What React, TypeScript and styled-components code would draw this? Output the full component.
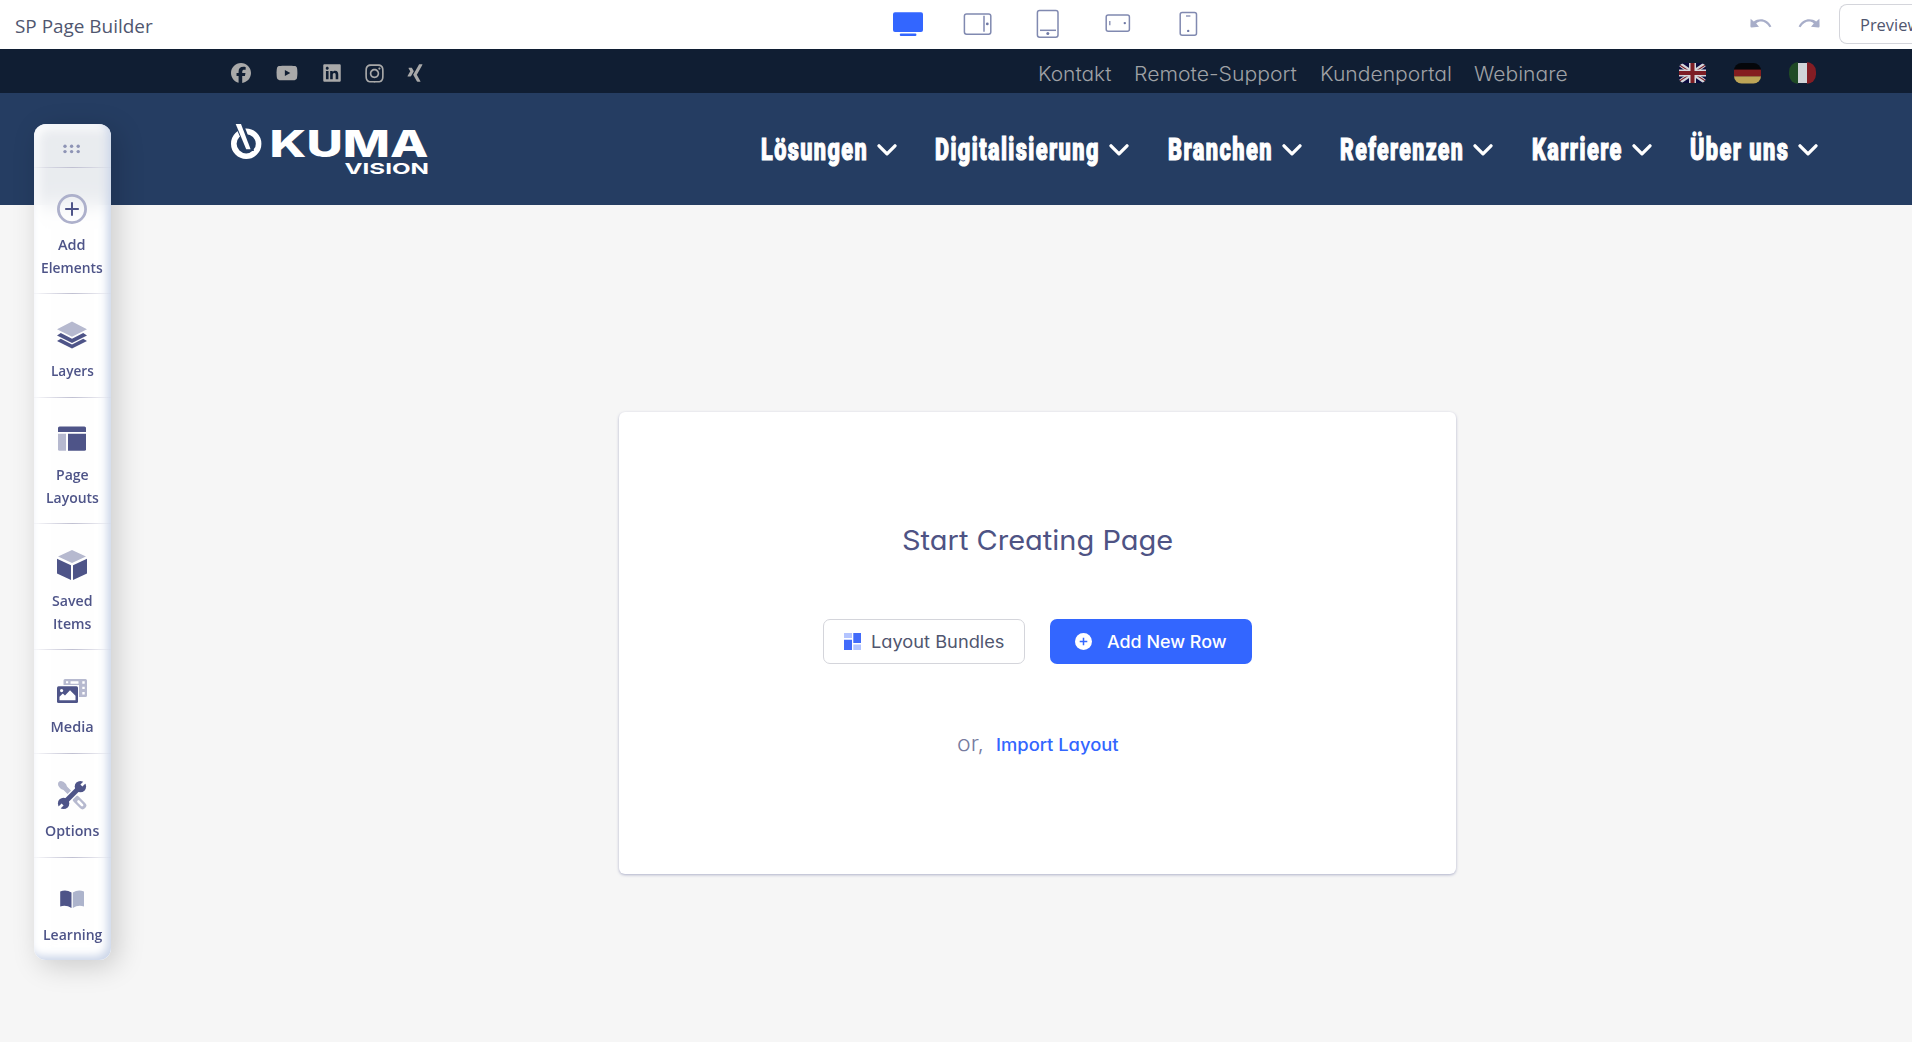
import React, { useLayoutEffect, useRef, useState } from "react";
import styled, { createGlobalStyle, css } from "styled-components";
import { FaFacebook, FaInstagram, FaLinkedin, FaXing, FaYoutube } from "react-icons/fa6";

const ui = `"Open Sans", "Noto Sans", sans-serif`;
const geometric = `Inter, "Liberation Sans", sans-serif`;

const GlobalStyle = createGlobalStyle`
  * { box-sizing: border-box; }
  body { margin: 0; background: #f6f6f6; overflow: hidden; }
`;

const FitBox = styled.span<{ $width: number }>`
  display: flex;
  flex: none;
  width: ${(p) => p.$width}px;
`;

/* cv11 selects the single-storey "a" in Inter. */
const FitInner = styled.span`
  flex: none;
  white-space: nowrap;
  transform-origin: left center;
  font-feature-settings: "cv11" 1;
`;

/* Stretches or condenses a label so it fills the given width exactly. */
function FitText({ width, children }: { width: number; children: string }) {
  const ref = useRef<HTMLSpanElement>(null);
  const [scale, setScale] = useState(1);
  useLayoutEffect(() => {
    if (ref.current) setScale(width / ref.current.offsetWidth);
  }, [width, children]);
  return (
    <FitBox $width={width}>
      <FitInner ref={ref} style={{ transform: `scaleX(${scale})` }}>
        {children}
      </FitInner>
    </FitBox>
  );
}

const Page = styled.div`
  display: flex;
  flex-direction: column;
  width: 100%;
  height: 1042px;
  overflow: hidden;
`;

const Toolbar = styled.header`
  display: grid;
  grid-template-columns: 893px 1fr auto;
  height: 49px;
  background: #fff;
  flex: none;
`;

const AppTitle = styled.div`
  padding: 0 0 0 15px;
  font: 400 18.5px/52px ${ui};
  color: #50566f;
`;

const Devices = styled.div`
  display: flex;
  align-items: flex-start;
  svg { display: block; flex: none; }
`;

const Actions = styled.div`
  display: flex;
  align-items: flex-start;
  color: #a8aec9;
  svg { margin: 17px 24px 0 0; flex: none; }
`;

const PreviewButton = styled.button`
  width: 73px;
  height: 40px;
  margin: 4px 0 0 -6px;
  padding: 0 0 0 20px;
  overflow: hidden;
  border: 1px solid #d4d5db;
  border-right: 0;
  border-radius: 8px 0 0 8px;
  background: #fff;
  font: 400 17px/40px ${ui};
  color: #50566f;
  text-align: left;
`;

const TopStrip = styled.div`
  display: flex;
  align-items: center;
  height: 44px;
  padding: 0 96px 0 231px;
  background: #101e33;
  flex: none;
`;

const Socials = styled.div`
  display: flex;
  align-items: center;
  color: #a9a9a9;
  width: 807px;
  padding-top: 4px;
  svg { display: block; flex: none; }
`;

const StripLinks = styled.nav`
  display: flex;
  gap: 22.8px;
  padding-top: 6px;
  font: 300 19.5px/32px ${geometric};
  color: #9fa1a5;
`;

const Flags = styled.div`
  display: flex;
  gap: 28px;
  margin-left: auto;
  padding-top: 3px;
  svg { display: block; }
`;

const SiteHeader = styled.div`
  display: flex;
  height: 112px;
  padding: 0 94px 0 230px;
  background: #253d62;
  flex: none;
  justify-content: space-between;
`;

const LogoSlot = styled.div`
  padding-top: 30px;
`;

const MainNav = styled.nav`
  display: flex;
  gap: 38.5px;
  padding-top: 37px;
  height: 77px;
`;

const NavItem = styled.div`
  display: flex;
  gap: 9px;
  align-items: center;
  font: 900 30.5px/40px Roboto, "Liberation Sans", sans-serif;
  letter-spacing: 2px;
  -webkit-text-stroke: 1.1px #fff;
  color: #fff;
  svg { margin-top: -1px; }
`;

const Canvas = styled.main`
  display: flex;
  flex: 1;
  padding: 207px 0 0 619px;
  background: #f6f6f6;
`;

const Card = styled.section`
  display: flex;
  flex-direction: column;
  align-items: center;
  width: 837px;
  height: 462px;
  padding-top: 108px;
  border-radius: 6px;
  background: #fff;
  box-shadow: 0 1px 3px rgba(75, 80, 140, 0.42);
`;

const CardTitle = styled.h1`
  margin: 0;
  font: 400 27.5px/40px ${geometric};
  color: #4e5384;
`;

const ButtonRow = styled.div`
  display: flex;
  gap: 25px;
  margin-top: 59px;
`;

const Button = styled.button<{ $primary?: boolean }>`
  display: flex;
  align-items: center;
  width: 202px;
  height: 45px;
  border-radius: 7px;
  font: 400 17px/24px ${geometric};
  svg { display: block; flex: none; }
  ${(p) =>
    p.$primary
      ? css`
          padding: 0 0 0 25px;
          gap: 15px;
          border: 0;
          background: #3366ff;
          color: #fff;
          font-weight: 500;
        `
      : css`
          padding: 0 0 0 20px;
          gap: 10px;
          border: 1px solid #d4d5db;
          background: #fff;
          color: #50566f;
        `}
`;

const ImportRow = styled.div`
  display: flex;
  align-items: baseline;
  gap: 12px;
  margin-top: 65px;
  line-height: 30px;
`;

const Or = styled.span`
  font: 300 20.5px/30px ${geometric};
  color: #777c9f;
`;

const ImportLink = styled.a`
  font: 500 17px/30px ${geometric};
  color: #3366ff;
`;

/* Floating tool palette that hovers over the page being edited. */
const Palette = styled.aside`
  position: absolute;
  left: 34px;
  top: 124px;
  width: 77px;
  height: 836px;
  border-radius: 12px;
  background: rgba(255, 255, 255, 0.9);
  backdrop-filter: blur(10px);
  box-shadow: 6px 6px 28px rgba(0, 0, 0, 0.18), inset -4px -4px 9px #ccd6e9,
    inset 4px 4px 12px #fff;
`;

const divider = css`
  border-bottom: 1px solid;
  border-image: linear-gradient(90deg, rgba(180, 182, 205, 0.05), #c0c0d2 50%, rgba(180, 182, 205, 0.05)) 1;
`;

const Grip = styled.div`
  display: flex;
  justify-content: center;
  height: 44px;
  padding: 20px 1px 0 0;
  ${divider}
`;

const Tool = styled.div<{ $last?: boolean; $tall?: boolean }>`
  display: flex;
  flex-direction: column;
  align-items: center;
  padding: 26px 1px ${(p) => (p.$last ? 0 : p.$tall ? 14 : 15)}px 0;
  font: 600 14.5px/23px ${ui};
  color: #4e5488;
  ${(p) => !p.$last && divider}
  svg { display: block; margin: 0 0 9px 0; }
`;

const ink = "#4e5488";
const pale = "#b6b9cf";

const Chevron = () => (
  <svg width="20" height="14" viewBox="0 0 20 14" fill="none" stroke="#fff" strokeWidth="3.3" strokeLinecap="round" strokeLinejoin="round">
    <path d="M2 2.8l8 8 8-8" />
  </svg>
);

const Undo = () => (
  <svg width="24" height="14" viewBox="0 0 24 14">
    <path d="M1.6 1.8L4.8 4.6C9.5.8 18.5 1 22.4 9.4L20.5 10.2C17 4 10.8 3 7.2 6.4L10 9.8L2.6 10.5Q1.4 10.5 1.4 9.3Z" fill="currentColor" />
  </svg>
);

const Redo = () => (
  <svg width="24" height="14" viewBox="0 0 24 14">
    <path transform="translate(24 0) scale(-1 1)" d="M1.6 1.8L4.8 4.6C9.5.8 18.5 1 22.4 9.4L20.5 10.2C17 4 10.8 3 7.2 6.4L10 9.8L2.6 10.5Q1.4 10.5 1.4 9.3Z" fill="currentColor" />
  </svg>
);

const DeviceIcons = () => (
  <svg width="305" height="48" viewBox="893 0 305 48" fill="none" stroke="#8089b0" strokeWidth="1.5">
    <rect x="893" y="12.3" width="30" height="19.6" rx="2" fill="#3366ff" stroke="none" />
    <rect x="899.8" y="33.6" width="16.6" height="2.3" rx="1" fill="#3366ff" stroke="none" />
    <rect x="964.4" y="13.9" width="26.4" height="20.4" rx="2.2" />
    <path d="M984 15.8v16" />
    <circle cx="987.3" cy="23.9" r="1.4" fill="#6f79a5" stroke="none" />
    <rect x="1037.4" y="10.6" width="20.6" height="26.6" rx="2.2" />
    <path d="M1040 30.3h16" />
    <circle cx="1047.8" cy="33.6" r="1.5" fill="#6f79a5" stroke="none" />
    <rect x="1106.2" y="15" width="23.2" height="16.2" rx="2" />
    <path d="M1109.8 21v4.2" strokeWidth="1.3" />
    <circle cx="1124.8" cy="23.1" r="1.2" fill="#6f79a5" stroke="none" />
    <rect x="1180.2" y="12.5" width="16.3" height="22.8" rx="2" />
    <path d="M1186 16h4.4" strokeWidth="1.3" />
    <circle cx="1188.2" cy="30.9" r="1.2" fill="#6f79a5" stroke="none" />
  </svg>
);

const Logo = () => (
  <svg width="200" height="54" viewBox="230 123 200 54">
    <circle cx="246.2" cy="143.8" r="12.4" fill="none" stroke="#fff" strokeWidth="5.6" />
    <path d="M234 123H243.2L254 151H246.2Z" fill="#253d62" />
    <path d="M235.7 124H241L250.6 149.2H246.2Z" fill="#fff" />
    <text x="269.5" y="156.6" fontFamily="Inter, sans-serif" fontWeight="800" fontSize="36.5" fill="#fff" textLength="159" lengthAdjust="spacingAndGlyphs">KUMA</text>
    <text x="344.5" y="174" fontFamily="Inter, sans-serif" fontWeight="700" fontSize="15.2" fill="#fff" textLength="84.5" lengthAdjust="spacingAndGlyphs">VISION</text>
  </svg>
);

const FlagUk = () => (
  <svg width="27" height="22" viewBox="0 0 27 22">
    <clipPath id="uk"><rect x="0" y="1" width="27" height="20" rx="5.5" /></clipPath>
    <g clipPath="url(#uk)">
      <rect width="27" height="22" fill="#0b0b3e" />
      <path d="M-1 1L28 21M28 1L-1 21" stroke="#d3d6da" strokeWidth="4.4" />
      <path d="M-1 2L13 11M28 2L14 11M-1 20L13 11M28 20L14 11" stroke="#7c1d24" strokeWidth="1.2" />
      <path d="M13.5 0v22M0 11h27" stroke="#d3d6da" strokeWidth="7" />
      <path d="M13.5 0v22M0 11h27" stroke="#7c1d24" strokeWidth="4" />
    </g>
  </svg>
);

const FlagDe = () => (
  <svg width="27" height="22" viewBox="0 0 27 22">
    <clipPath id="de"><rect x="0" y="1" width="27" height="20.5" rx="7.5" /></clipPath>
    <g clipPath="url(#de)">
      <rect width="27" height="8" fill="#05070b" />
      <rect y="7.6" width="27" height="7" fill="#841d1f" />
      <rect y="14.4" width="27" height="8" fill="#bda557" />
    </g>
  </svg>
);

const FlagIt = () => (
  <svg width="27" height="22" viewBox="0 0 27 22">
    <clipPath id="it"><rect width="27" height="22" rx="9.5" /></clipPath>
    <g clipPath="url(#it)">
      <rect width="9" height="22" fill="#1f4a26" />
      <rect x="9" y="1" width="9" height="20" fill="#d0d4d8" />
      <rect x="18" width="9" height="22" fill="#841d24" />
    </g>
  </svg>
);

const GripDots = () => (
  <svg width="18" height="10" viewBox="0 0 18 10" fill="#8e94b5">
    {[2, 8.6, 15.2].map((x) => (
      <g key={x}>
        <circle cx={x} cy="2.2" r="1.7" />
        <circle cx={x} cy="7.6" r="1.7" />
      </g>
    ))}
  </svg>
);

const icons: Record<string, React.ReactNode> = {
  add: (
    <>
      <circle cx="15" cy="15" r="13.6" fill="none" stroke="#adb0cb" strokeWidth="2.8" />
      <path d="M15 8.2v13.6M8.2 15h13.6" stroke={ink} strokeWidth="2" />
    </>
  ),
  layers: (
    <>
      <path d="M15 1.6L30 9.2 15 16.8 0 9.2Z" fill={pale} />
      <path d="M0 15.4l3.8-2.3L15 18.8l11.2-5.7L30 15.4 15 23Z" fill={ink} />
      <path d="M0 21l3.8-2.3L15 24.4l11.2-5.7L30 21 15 28.6Z" fill={ink} />
    </>
  ),
  layouts: (
    <>
      <path d="M1 8V4q0-1.6 1.6-1.6h24.8Q29 2.4 29 4v4H1Z" fill={ink} />
      <path d="M1 9.8h8v17H2.6Q1 26.8 1 25.2Z" fill={pale} />
      <path d="M11 9.8h18v15.4q0 1.6-1.6 1.6H11Z" fill={ink} />
    </>
  ),
  saved: (
    <>
      <path d="M15 0L29 6.5 15 13 1 6.5Z" fill={pale} />
      <path d="M0 8.8L14 15.2V30L0 23.6Z" fill={ink} />
      <path d="M30 8.8L16 15.2V30L30 23.6Z" fill={ink} />
    </>
  ),
  media: (
    <>
      <path d="M8 3h20.5q1.5 0 1.5 1.5v15q0 1.5-1.5 1.5H22V9H6.500V4.500Q6.500 3 8 3Z" fill={pale} />
      <path d="M9 5.300h2.200v2H9zM25.300 5.300h2.400v2.400h-2.400zM25.300 10.700h2.400v2.400h-2.400zM25.300 16h2.400v2.400h-2.400zM13.500 5.300h8v2.500h-8z" fill="#fff" />
      <rect x="0" y="10.3" width="21" height="16.7" rx="1.5" fill={ink} />
      <path d="M2.500 24.300v-3.500l3.300-3.200 2.200 2 5-5.300 5.500 5.500v4.500Z" fill="#fff" />
      <circle cx="4.6" cy="14.6" r="1.6" fill="#fff" />
    </>
  ),
  options: (
    <>
      <path d="M1.300 2.500L2.500 1.300Q5.500 0 9 4l1 2.500 4.500 4.500-3.500 3.500L6.500 10 4 9Q0 5.500 1.300 2.500Z" fill={pale} />
      <path d="M19.5 19.5l6 6" stroke={pale} strokeWidth="7.4" strokeLinecap="round" />
      <path d="M21.5 21.5l3.6 3.6" stroke="#fff" strokeWidth="2.6" strokeLinecap="round" />
      <path d="M8.5 21.5L21.5 8.5" stroke="#fff" strokeWidth="7.5" />
      <path d="M7 23L23 7" stroke={ink} strokeWidth="5" />
      <circle cx="23.4" cy="6.6" r="5.7" fill={ink} />
      <circle cx="6.6" cy="23.4" r="5.7" fill={ink} />
      <path d="M24.4 5.6L28.5 1.5M5.6 24.4L1.5 28.5" stroke="#fff" strokeWidth="2.8" />
    </>
  ),
  learning: (
    <>
      <path d="M3.2 7.5Q9 5 14.5 8.500V24Q9 20.500 3.200 22.500Z" fill={ink} />
      <path d="M27 7.5Q21.2 5 15.800 8.500V24Q21.200 20.500 27 22.500Z" fill="#adb4cc" />
    </>
  ),
};

const tools: { icon: string; lines: [string, number][] }[] = [
  { icon: "add", lines: [["Add", 28], ["Elements", 62]] },
  { icon: "layers", lines: [["Layers", 43]] },
  { icon: "layouts", lines: [["Page", 33], ["Layouts", 53]] },
  { icon: "saved", lines: [["Saved", 41], ["Items", 38]] },
  { icon: "media", lines: [["Media", 43]] },
  { icon: "options", lines: [["Options", 54]] },
  { icon: "learning", lines: [["Learning", 59]] },
];

const navigation: [string, number][] = [
  ["Lösungen", 107],
  ["Digitalisierung", 165],
  ["Branchen", 105],
  ["Referenzen", 124],
  ["Karriere", 91],
  ["Über uns", 99],
];

const links: [string, number][] = [
  ["Kontakt", 73],
  ["Remote-Support", 163],
  ["Kundenportal", 132],
  ["Webinare", 94],
];

const Gap = styled.span<{ $size: number }>`
  flex: none;
  width: ${(p) => p.$size}px;
`;

export default function App() {
  return (
    <Page>
      <GlobalStyle />
      <Toolbar>
        <AppTitle><FitText width={138}>SP Page Builder</FitText></AppTitle>
        <Devices><DeviceIcons /></Devices>
        <Actions>
          <Undo />
          <Redo />
          <PreviewButton><FitText width={60}>Preview</FitText></PreviewButton>
        </Actions>
      </Toolbar>
      <TopStrip>
        <Socials>
          <FaFacebook size={20} />
          <Gap $size={25} />
          <FaYoutube size={22} />
          <Gap $size={24} />
          <FaLinkedin size={20} />
          <Gap $size={22} />
          <FaInstagram size={21} />
          <Gap $size={20} />
          <FaXing size={20} />
        </Socials>
        <StripLinks>
          {links.map(([label, width]) => (
            <FitText key={label} width={width}>{label}</FitText>
          ))}
        </StripLinks>
        <Flags>
          <FlagUk />
          <FlagDe />
          <FlagIt />
        </Flags>
      </TopStrip>
      <SiteHeader>
        <LogoSlot><Logo /></LogoSlot>
        <MainNav>
          {navigation.map(([label, width]) => (
            <NavItem key={label}>
              <FitText width={width}>{label}</FitText>
              <Chevron />
            </NavItem>
          ))}
        </MainNav>
      </SiteHeader>
      <Canvas>
        <Card>
          <CardTitle><FitText width={271}>Start Creating Page</FitText></CardTitle>
          <ButtonRow>
            <Button>
              <svg width="17" height="17" viewBox="0 0 17 17">
                <path d="M0 0h8v5H0zM9.300 11.500H17V17H9.300z" fill="#b3c4ff" />
                <path d="M0 6.800h8V17H0zM9.300 0H17v10H9.300z" fill="#426bfa" />
              </svg>
              <FitText width={133}>Layout Bundles</FitText>
            </Button>
            <Button $primary>
              <svg width="17" height="17" viewBox="0 0 17 17">
                <circle cx="8.5" cy="8.5" r="8.5" fill="#fff" />
                <path d="M8.5 4.700v7.600M4.700 8.500h7.600" stroke="#3366ff" strokeWidth="1.5" />
              </svg>
              <FitText width={120}>Add New Row</FitText>
            </Button>
          </ButtonRow>
          <ImportRow>
            <Or><FitText width={27}>or,</FitText></Or>
            <ImportLink><FitText width={123}>Import Layout</FitText></ImportLink>
          </ImportRow>
        </Card>
      </Canvas>
      <Palette>
        <Grip><GripDots /></Grip>
        {tools.map(({ icon, lines }, i) => (
          <Tool key={icon} $last={i === tools.length - 1} $tall={lines.length > 1}>
            <svg width="30" height="30" viewBox="0 0 30 30">{icons[icon]}</svg>
            {lines.map(([label, width]) => (
              <FitText key={label} width={width}>{label}</FitText>
            ))}
          </Tool>
        ))}
      </Palette>
    </Page>
  );
}
